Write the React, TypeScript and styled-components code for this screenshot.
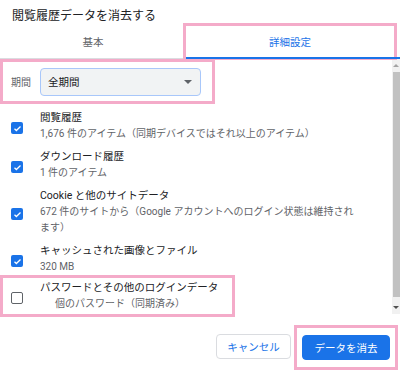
import React from "react";
import styled, { createGlobalStyle, css } from "styled-components";

const GlobalStyle = createGlobalStyle`
  html, body {
    margin: 0;
    padding: 0;
    background: #ffffff;
  }
  body {
    font-family: Roboto, "Noto Sans CJK JP", "Noto Sans", sans-serif;
    color: #202124;
    -webkit-font-smoothing: antialiased;
  }
  * { box-sizing: border-box; }
`;

const PINK = "#f4abc9";
const BLUE = "#1a73e8";

const highlight = css`
  outline: 3px solid ${PINK};
`;

const Dialog = styled.div`
  width: 400px;
  height: 374px;
  display: flex;
  flex-direction: column;
  overflow: hidden;
`;

const Title = styled.h1`
  margin: 0;
  height: 24px;
  padding: 8px 12px 0;
  font-size: 12px;
  font-weight: 400;
  line-height: 16px;
  color: #202124;
`;

const TabBar = styled.div`
  height: 35px;
  display: grid;
  grid-template-columns: 186px 1fr;
  padding-right: 6px;
  border-bottom: 1px solid #dadce0;
`;

const Tab = styled.div<{ $active?: boolean }>`
  position: relative;
  margin-top: 2px;
  height: 31px;
  display: flex;
  align-items: center;
  justify-content: center;
  font-size: 10.5px;
  color: ${({ $active }) => ($active ? BLUE : "#5f6368")};
  ${({ $active }) =>
    $active &&
    css`
      ${highlight}
      &::after {
        content: "";
        position: absolute;
        left: 0;
        right: -6px;
        bottom: -2px;
        height: 2px;
        background: ${BLUE};
      }
    `}
`;

const Body = styled.div`
  height: 255px;
  display: flex;
`;

const Content = styled.div`
  flex: 1;
  display: flex;
  flex-direction: column;
  padding-top: 3px;
`;

const PeriodRow = styled.div`
  align-self: flex-start;
  width: 209px;
  height: 39px;
  display: flex;
  align-items: center;
  gap: 9px;
  padding: 0 7px 0 11px;
  margin-left: 3px;
  ${highlight}
`;

const PeriodLabel = styled.span`
  font-size: 10px;
  color: #5f6368;
  margin-left: -3px;
`;

const Select = styled.div`
  width: 161px;
  height: 28px;
  display: flex;
  align-items: center;
  justify-content: space-between;
  padding: 0 8px 0 7px;
  background: #f1f3f4;
  border: 1px solid #a8c7fa;
  border-radius: 4px;
  font-size: 10.5px;
  color: #202124;
`;

const Caret = styled.span`
  width: 0;
  height: 0;
  border-left: 4px solid transparent;
  border-right: 4px solid transparent;
  border-top: 4px solid #5f6368;
`;

const List = styled.div`
  display: flex;
  flex-direction: column;
  gap: 7px;
  padding-top: 9px;
`;

const Item = styled.div<{ $marked?: boolean }>`
  display: flex;
  align-items: center;
  padding-left: 11px;
  ${({ $marked }) =>
    $marked &&
    css`
      align-self: flex-start;
      width: 229px;
      margin-left: 3px;
      padding-left: 8px;
      padding-top: 2px;
      padding-bottom: 2px;
      margin-top: -4px;
      ${highlight}
    `}
`;

const Box = styled.span<{ $checked?: boolean }>`
  flex: none;
  width: 12px;
  height: 12px;
  margin-top: 4px;
  margin-right: 17px;
  border-radius: 2px;
  display: flex;
  align-items: center;
  justify-content: center;
  ${({ $checked }) =>
    $checked
      ? css`
          background: ${BLUE};
        `
      : css`
          border: 1.6px solid #5f6368;
        `}
`;

const Texts = styled.div`
  max-width: 318px;
  display: flex;
  flex-direction: column;
`;

const ItemTitle = styled.div`
  font-size: 10.5px;
  line-height: 16px;
  color: #202124;
`;

const ItemSub = styled.div<{ $indent?: number }>`
  font-size: 10px;
  line-height: 16px;
  color: #5f6368;
  padding-left: ${({ $indent }) => $indent ?? 0}px;
`;

const Scrollbar = styled.div`
  width: 8px;
  display: flex;
  flex-direction: column;
  align-items: center;
  background: #f1f1f1;
`;

const Arrow = styled.span<{ $down?: boolean }>`
  flex: none;
  margin: 5px 0;
  width: 0;
  height: 0;
  border-left: 3px solid transparent;
  border-right: 3px solid transparent;
  ${({ $down }) =>
    $down
      ? css`border-top: 3px solid #505050;`
      : css`border-bottom: 3px solid #a3a3a3;`}
`;

const Thumb = styled.span`
  flex: 1;
  width: 7px;
  margin-left: 1px;
  margin-bottom: 4px;
  background: #c1c1c1;
`;

const Footer = styled.div`
  flex: 1;
  display: flex;
  justify-content: flex-end;
  align-items: flex-start;
  padding: 11px 2px 0 0;
`;

const Frame = styled.div`
  display: flex;
  padding: 7px 5px;
  border: 3px solid ${PINK};
  margin-left: 3px;
`;

const Button = styled.button<{ $primary?: boolean }>`
  height: 25px;
  padding: 0;
  border-radius: 4px;
  font-family: inherit;
  font-size: 10.5px;
  cursor: pointer;
  ${({ $primary }) =>
    $primary
      ? css`
          width: 88px;
          background: ${BLUE};
          border: 1px solid ${BLUE};
          color: #ffffff;
        `
      : css`
          width: 75px;
          margin-top: 9px;
          background: #ffffff;
          border: 1px solid #dadce0;
          color: ${BLUE};
        `}
`;

const Check = () => (
  <svg width="9" height="9" viewBox="0 0 24 24">
    <path d="M4 12.5l5 5L20 6.5" fill="none" stroke="#fff" strokeWidth="3.4" />
  </svg>
);

type Entry = { title: string; sub: string; checked: boolean; marked?: boolean; indent?: number };

const entries: Entry[] = [
  { title: "閲覧履歴", sub: "1,676 件のアイテム（同期デバイスではそれ以上のアイテム）", checked: true },
  { title: "ダウンロード履歴", sub: "1 件のアイテム", checked: true },
  {
    title: "Cookie と他のサイトデータ",
    sub: "672 件のサイトから（Google アカウントへのログイン状態は維持されます）",
    checked: true,
  },
  { title: "キャッシュされた画像とファイル", sub: "320 MB", checked: true },
  {
    title: "パスワードとその他のログインデータ",
    sub: "個のパスワード（同期済み）",
    checked: false,
    marked: true,
    indent: 15,
  },
];

export default function App() {
  return (
    <>
      <GlobalStyle />
      <Dialog>
        <Title>閲覧履歴データを消去する</Title>
        <TabBar>
          <Tab>基本</Tab>
          <Tab $active>詳細設定</Tab>
        </TabBar>
        <Body>
          <Content>
            <PeriodRow>
              <PeriodLabel>期間</PeriodLabel>
              <Select>
                <span>全期間</span>
                <Caret />
              </Select>
            </PeriodRow>
            <List>
              {entries.map((e) => (
                <Item key={e.title} $marked={e.marked}>
                  <Box $checked={e.checked}>{e.checked && <Check />}</Box>
                  <Texts>
                    <ItemTitle>{e.title}</ItemTitle>
                    <ItemSub $indent={e.indent}>{e.sub}</ItemSub>
                  </Texts>
                </Item>
              ))}
            </List>
          </Content>
          <Scrollbar>
            <Arrow />
            <Thumb />
            <Arrow $down />
          </Scrollbar>
        </Body>
        <Footer>
          <Button>キャンセル</Button>
          <Frame>
            <Button $primary>データを消去</Button>
          </Frame>
        </Footer>
      </Dialog>
    </>
  );
}
